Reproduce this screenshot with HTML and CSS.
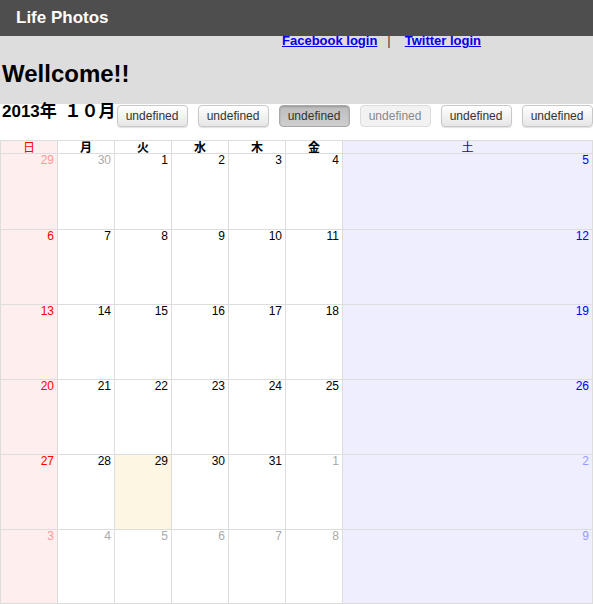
FILE: index.html
```html
<!DOCTYPE html>
<html lang="ja">
<head>
<meta charset="utf-8">
<title>Life Photos</title>
<link rel="stylesheet" href="styles.css">
</head>
<body>
<header class="topbar">
  <div class="brand">Life Photos</div>
</header>
<section class="intro">
  <div class="links">
    <a href="#">Facebook login</a><span class="sep">|</span><a href="#">Twitter login</a>
  </div>
  <h1 class="welcome">Wellcome!!</h1>
</section>
<div class="monthbar">
  <h2 class="month">2013年 １０月</h2>
  <div class="btns">
    <button class="btn">undefined</button>
    <button class="btn">undefined</button>
    <button class="btn active">undefined</button>
    <button class="btn disabled">undefined</button>
    <button class="btn">undefined</button>
    <button class="btn">undefined</button>
  </div>
</div>
<div class="cal">
  <div class="hd sun">日</div><div class="hd">月</div><div class="hd">火</div><div class="hd">水</div><div class="hd">木</div><div class="hd">金</div><div class="hd sat">土</div>

  <div class="day sun other">29</div><div class="day other">30</div><div class="day">1</div><div class="day">2</div><div class="day">3</div><div class="day">4</div><div class="day sat">5</div>

  <div class="day sun">6</div><div class="day">7</div><div class="day">8</div><div class="day">9</div><div class="day">10</div><div class="day">11</div><div class="day sat">12</div>

  <div class="day sun">13</div><div class="day">14</div><div class="day">15</div><div class="day">16</div><div class="day">17</div><div class="day">18</div><div class="day sat">19</div>

  <div class="day sun">20</div><div class="day">21</div><div class="day">22</div><div class="day">23</div><div class="day">24</div><div class="day">25</div><div class="day sat">26</div>

  <div class="day sun">27</div><div class="day">28</div><div class="day today">29</div><div class="day">30</div><div class="day">31</div><div class="day other">1</div><div class="day sat other">2</div>

  <div class="day sun other">3</div><div class="day other">4</div><div class="day other">5</div><div class="day other">6</div><div class="day other">7</div><div class="day other">8</div><div class="day sat other">9</div>
</div>
</body>
</html>
```
FILE: styles.css
```css
html, body {
  margin: 0;
  padding: 0;
  background: #ffffff;
}
body {
  font-family: "Liberation Sans", "Noto Sans CJK JP", sans-serif;
  color: #000;
  overflow: hidden;
}
.topbar {
  height: 36px;
  background: #4e4e4e;
}
.brand {
  padding-left: 16px;
  font-size: 17px;
  font-weight: bold;
  line-height: 36px;
  color: #ffffff;
}
.intro {
  display: flow-root;
  height: 68px;
  box-sizing: border-box;
  background: #dddddd;
}
.links {
  margin-top: -2px;
  padding-left: 282px;
  height: 14px;
  line-height: 14px;
  font-size: 13px;
  font-weight: bold;
}
.links a {
  color: #0000ee;
  text-decoration: underline;
}
.sep {
  margin: 0 14px 0 10px;
  color: #333333;
  font-weight: normal;
}
.welcome {
  margin: 12px 0 0 2px;
  font-size: 24px;
  line-height: 28px;
  font-weight: bold;
}
.monthbar {
  display: flex;
  align-items: flex-start;
  height: 36px;
}
.month {
  margin: -1px 1px 0 2px;
  font-size: 17px;
  line-height: 18px;
  font-weight: bold;
  word-spacing: 3px;
  white-space: nowrap;
}
.btns {
  display: flex;
  gap: 10px;
  margin-top: 1px;
}
.btn {
  width: 71px;
  height: 22px;
  padding: 0;
  flex: none;
  font-family: "Liberation Sans", sans-serif;
  font-size: 12px;
  color: #333;
  background: linear-gradient(#ffffff, #e6e6e6);
  border: 1px solid #c8c8c8;
  border-radius: 4px;
  box-shadow: 0 1px 1px rgba(0,0,0,0.12);
}
.btn.active {
  background: linear-gradient(#bdbdbd, #cfcfcf);
  border-color: #a9a9a9;
  box-shadow: inset 0 1px 2px rgba(0,0,0,0.2);
}
.btn.disabled {
  color: #888;
  background: #f2f2f2;
  border-color: #dcdcdc;
  box-shadow: none;
}
.cal {
  display: grid;
  grid-template-columns: repeat(6, 57px) 1fr;
  grid-template-rows: 13px 76px 75px 75px 75px 75px 74px;
  border-top: 1px solid #dddddd;
  border-left: 1px solid #dddddd;
  font-size: 12px;
}
.hd, .day {
  box-sizing: border-box;
  border-right: 1px solid #dddddd;
  border-bottom: 1px solid #dddddd;
  background: #ffffff;
}
.hd {
  text-align: center;
  font-weight: bold;
  line-height: 12px;
  font-family: "Noto Sans CJK JP", sans-serif;
  font-size: 12px;
}
.day {
  text-align: right;
  padding-right: 3px;
  line-height: 11px;
  padding-top: 1px;
}
.sun { background: #ffeeee; color: #ff0000; }
.sat { background: #eeeeff; color: #0000ff; }
.hd.sun, .hd.sat { font-weight: normal; }
.other { color: #aaaaaa; }
.sun.other { color: #ff9999; }
.sat.other { color: #9999ff; }
.today { background: #fdf6e3; }
```
